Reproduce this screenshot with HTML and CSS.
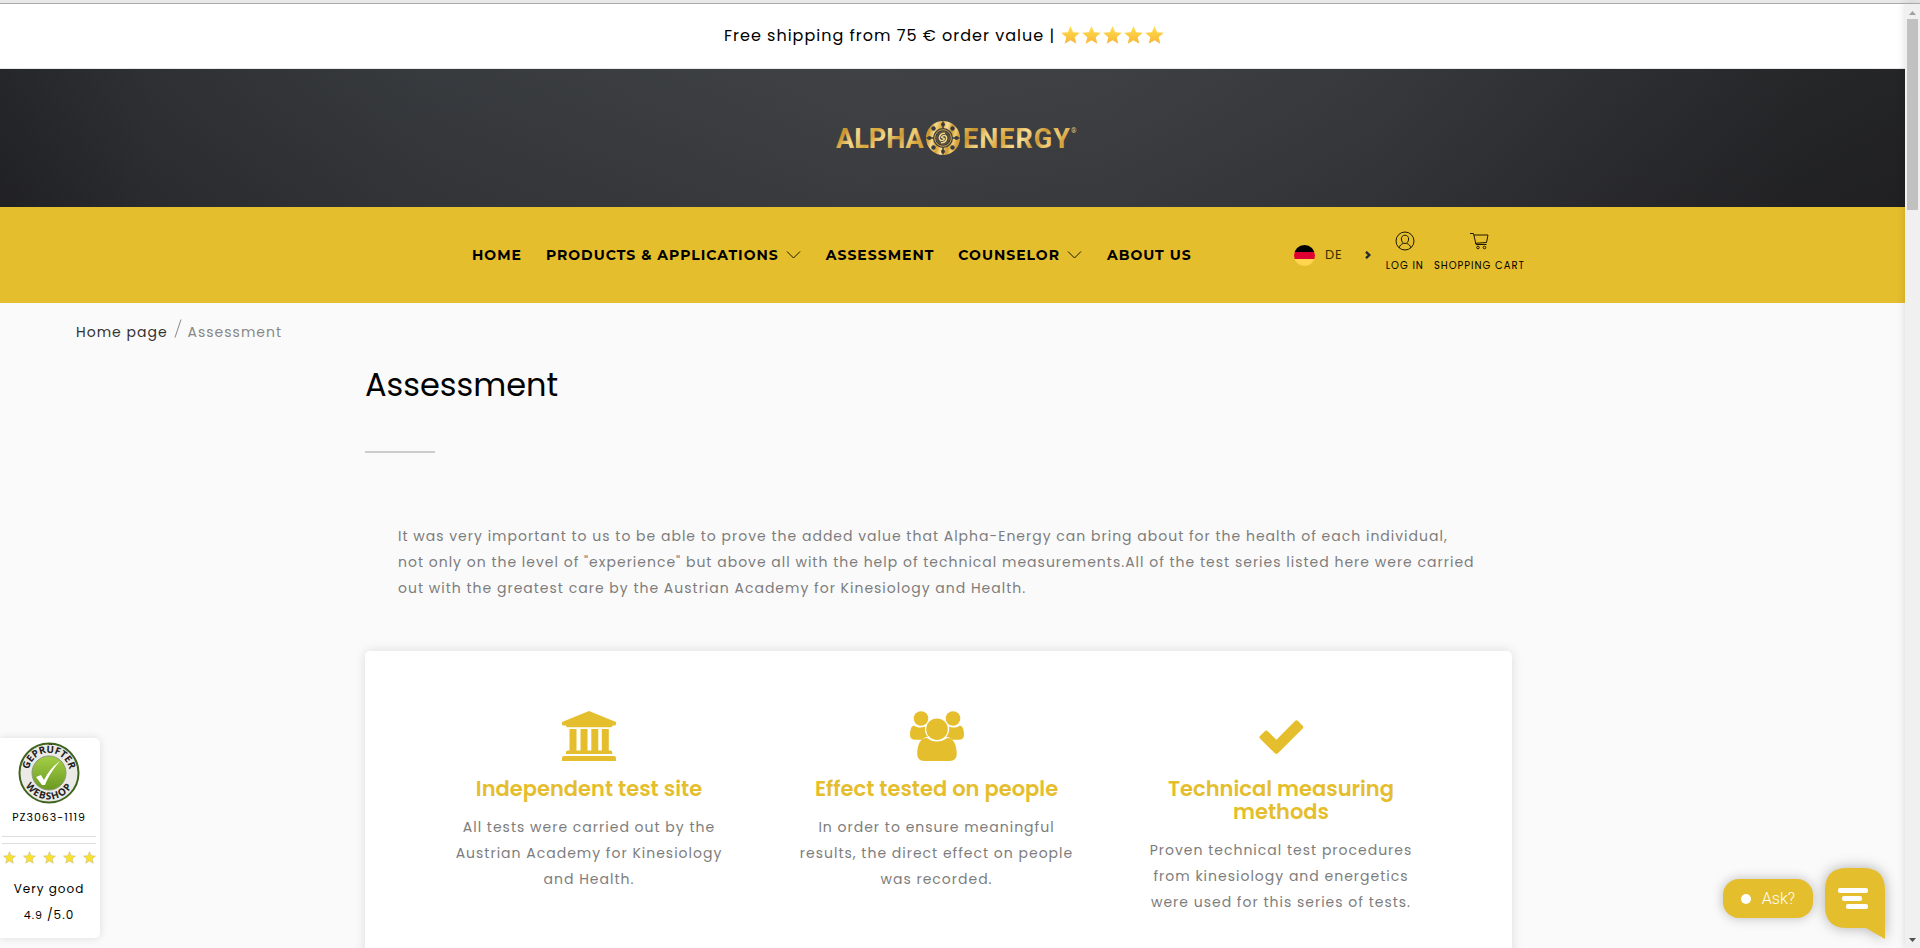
FILE: index.html
```html
<!DOCTYPE html>
<html lang="en">
<head>
<meta charset="utf-8">
<title>Assessment – Alpha Energy</title>
<link rel="stylesheet" href="styles.css">
</head>
<body>
<svg width="0" height="0" class="defs" aria-hidden="true">
  <defs>
    <linearGradient id="gold" x1="0" y1="0" x2="1" y2="0.25">
      <stop offset="0" stop-color="#f0cd70"/><stop offset=".15" stop-color="#c8932a"/><stop offset=".3" stop-color="#f3d98c"/><stop offset=".48" stop-color="#d9a437"/><stop offset=".62" stop-color="#f7e09a"/><stop offset=".78" stop-color="#cc9730"/><stop offset=".9" stop-color="#f0cf78"/><stop offset="1" stop-color="#d6a23c"/>
    </linearGradient>
    <linearGradient id="star" x1="0" y1="0" x2="0" y2="1"><stop offset="0" stop-color="#ffe04a"/><stop offset="1" stop-color="#f8b53a"/></linearGradient>
    <linearGradient id="green" x1="0" y1="0" x2="0" y2="1"><stop offset="0" stop-color="#a3cf45"/><stop offset="1" stop-color="#6c9a22"/></linearGradient>
    <symbol id="s-star" viewBox="0 0 20 20"><path d="M10 1l2.600 6.200 6.700.6-5.100 4.400 1.600 6.600L10 15.300l-5.800 3.500 1.600-6.600L.7 7.800l6.700-.6z"/></symbol>
    <symbol id="s-down" viewBox="0 0 16 10"><path d="M1.500 1.500l6.500 6.500 6.500-6.500" fill="none" stroke="#1a1600" stroke-width="1"/></symbol>
  </defs>
</svg>
<div class="window">
  <div class="page">
    <div class="banner">Free shipping from 75 € order value |
      <span class="stars">
        <svg><use href="#s-star"/></svg><svg><use href="#s-star"/></svg><svg><use href="#s-star"/></svg><svg><use href="#s-star"/></svg><svg><use href="#s-star"/></svg>
      </span>
    </div>
    <header class="hero">
      <a href="#" class="logo" aria-label="Alpha Energy">
        <svg width="242" height="36" viewBox="0 0 242 36">
          <g fill="url(#gold)" class="logo-text"><text x="2" y="28">ALPHA</text><text x="129" y="28" class="tracked">ENERGY</text><text x="237" y="13" class="reg">®</text></g>
          <circle cx="109" cy="18" r="17" fill="url(#gold)"/>
          <g transform="translate(1 0)">
          <g fill="#3a3b3d">
            <circle cx="108" cy="4.500" r="2"/><circle cx="108" cy="31.500" r="2"/><circle cx="94.500" cy="18" r="2"/><circle cx="121.500" cy="18" r="2"/><path d="M107.300 1.500h1.400v7h-1.400zM107.300 27.500h1.400v7h-1.400zM91.500 17.300h7v1.400h-7zM117.500 17.300h7v1.400h-7z"/>
            <circle cx="98.500" cy="8.500" r="2.200"/><circle cx="117.500" cy="8.500" r="2.200"/><circle cx="98.500" cy="27.500" r="2.200"/><circle cx="117.500" cy="27.500" r="2.200"/>
            <circle cx="108" cy="18" r="10"/>
          </g>
          <circle cx="108" cy="18" r="8.300" fill="none" stroke="#d5a84a"/>
          <circle cx="108" cy="18" r="6.200" fill="none" stroke="#8a7138" stroke-width=".8"/>
          <path d="M109.500 13.300c-5 0-6.500 5-3.800 7.300M106.500 22.700c5 0 6.500-5 3.800-7.300M109.800 15.500c-3.500 0-4 2.500-1.800 2.500s1.700 2.600-1.800 2.500" fill="none" stroke="#f1d58a" stroke-width="1.500" stroke-linecap="round"/>
          </g>
        </svg>
      </a>
    </header>
    <nav class="nav">
      <ul class="menu">
        <li><a href="#">HOME</a></li>
        <li><a href="#">PRODUCTS &amp; APPLICATIONS <svg><use href="#s-down"/></svg></a></li>
        <li><a href="#">ASSESSMENT</a></li>
        <li><a href="#">COUNSELOR <svg><use href="#s-down"/></svg></a></li>
        <li><a href="#">ABOUT US</a></li>
      </ul>
      <div class="tools">
        <button class="lang" type="button">
          <svg width="21" height="21" viewBox="0 0 21 21"><clipPath id="c"><circle cx="10.500" cy="10.500" r="10.500"/></clipPath><g clip-path="url(#c)"><path fill="#000" d="M0 0h21v7H0z"/><path fill="#dd0031" d="M0 7h21v7H0z"/><path fill="#ffd54f" d="M0 14h21v7H0z"/></g></svg>
          <span>DE</span>
          <svg class="caret" width="6" height="8" viewBox="0 0 6 8"><path d="M1 .8L4.300 4 1 7.200" fill="none" stroke="#222b30" stroke-width="2.400"/></svg>
        </button>
        <a href="#" class="tool"><svg width="20" height="20" viewBox="0 0 20 20" fill="none" stroke="#1c1800"><circle cx="10" cy="10" r="9"/><path d="M10 4.200c-2.300 0-3.600 1.600-3.600 3.800 0 2.700 1.600 4.500 3.600 4.500s3.600-1.800 3.600-4.500c0-2.200-1.300-3.800-3.600-3.800zM4.200 17c.5-2.500 2-4 4-4.500M15.800 17c-.5-2.500-2-4-4-4.500"/></svg><span>LOG IN</span></a>
        <a href="#" class="tool"><svg width="20" height="20" viewBox="0 0 20 20" fill="none" stroke="#1c1800"><path d="M1 2.500h3.500L7 13.500h10.500M5 4h14l-1.500 7.500-11 .8M17 13.500H7.500"/><circle cx="9" cy="16.500" r="1.300"/><circle cx="15.500" cy="16.500" r="1.300"/></svg><span>SHOPPING CART</span></a>
      </div>
    </nav>
    <div class="crumbs"><a href="#">Home page</a><svg width="8" height="19" viewBox="0 0 8 19"><path d="M1 18.500L7 .5" stroke="#888" fill="none"/></svg><span>Assessment</span></div>
    <main class="content">
      <h1>Assessment</h1>
      <hr class="rule">
      <p class="intro">It was very important to us to be able to prove the added value that Alpha-Energy can bring about for the health of each individual,<br>not only on the level of "experience" but above all with the help of technical measurements.All of the test series listed here were carried<br>out with the greatest care by the Austrian Academy for Kinesiology and Health.</p>
      <section class="card">
        <article>
          <svg width="54" height="50" viewBox="0 0 54 50"><path d="M27 0l27 11v2q0 1.500-1.500 1.500H50.500q0 1.700-1.500 1.700H5.500Q4 16.200 4 14.500H1.500Q0 14.500 0 13v-2zM7.500 18h7v21.500h4V18h7v21.500h3.800V18h7v21.500h3.500V18h7v21.500H48.500q1.700 0 1.700 1.700V43H4v-1.800q0-1.700 1.700-1.700H7.500zM2 45h50q2 0 2 2v3H0v-3q0-2 2-2z"/></svg>
          <h2>Independent test site</h2>
          <p>All tests were carried out by the<br>Austrian Academy for Kinesiology<br>and Health.</p>
        </article>
        <article>
          <svg width="54" height="50" viewBox="0 0 54 50"><circle cx="11" cy="7.500" r="7.300"/><circle cx="43" cy="7.500" r="7.300"/><circle cx="27" cy="18.200" r="10.800"/><path d="M4 14.700c4 2.200 8 2.300 11 .9-.6 4 .3 7.500 2.800 10.200-3 .5-4.600 1.500-6 3H5q-5 0-5-5c0-4 1-9.100 4-9.100zM50 14.700c-4 2.200-8 2.300-11 .9.600 4-.3 7.500-2.800 10.200 3 .5 4.600 1.500 6 3H49q5 0 5-5c0-4-1-9.100-4-9.100zM17 27c6 4.800 14 4.800 20 0 7 0 9.700 7.500 9.700 16q0 7-7 7H14.200q-7 0-7-7c0-8.500 2.800-16 9.800-16z"/></svg>
          <h2>Effect tested on people</h2>
          <p>In order to ensure meaningful<br>results, the direct effect on people<br>was recorded.</p>
        </article>
        <article>
          <svg width="54" height="50" viewBox="0 0 54 50"><path d="M6.200 24.800l4.600-4.600q1.500-1.500 3 0l8.600 8.600L41 10q1.500-1.500 3 0l4.700 4.700q1.200 1.300 0 2.800L23.900 42.300q-1.500 1.400-3 0L6.200 27.800q-1.500-1.500 0-3z"/></svg>
          <h2>Technical measuring<br>methods</h2>
          <p>Proven technical test procedures<br>from kinesiology and energetics<br>were used for this series of tests.</p>
        </article>
      </section>
    </main>
  </div>
  <div class="scrollbar" aria-hidden="true">
    <svg width="7" height="4" viewBox="0 0 7 4"><path d="M0 4L3.500 0 7 4z" fill="#a0a0a0"/></svg>
    <div class="thumb"></div>
    <svg width="7" height="4" viewBox="0 0 7 4"><path d="M0 0h7L3.500 4z" fill="#505050"/></svg>
  </div>
</div>
<aside class="trust">
  <svg class="seal" width="62" height="62" viewBox="0 0 62 62">
    <circle cx="31" cy="31" r="29.500" fill="#eceae6" stroke="#3f6420" stroke-width="2"/>
    <circle cx="31" cy="31" r="17" fill="url(#green)" stroke="#8a9a78"/>
    <path id="arc1" d="M12 39A20.500 20.500 0 1 1 50 39" fill="none"/>
    <path id="arc2" d="M4.500 31A26.500 26.500 0 0 0 57.500 31" fill="none"/>
    <text class="seal-text"><textPath href="#arc1" startOffset="50%" text-anchor="middle">GEPRÜFTER</textPath></text>
    <text class="seal-text wide"><textPath href="#arc2" startOffset="50%" text-anchor="middle">WEBSHOP</textPath></text>
    <path d="M18 35l5-2 3 5c4-8 9-14 16-19-6 7-11 14-15 24h-3z" fill="#fff"/>
  </svg>
  <span class="code">PZ3063-1119</span>
  <div class="lines"></div>
  <div class="rate"><svg><use href="#s-star"/></svg><svg><use href="#s-star"/></svg><svg><use href="#s-star"/></svg><svg><use href="#s-star"/></svg><svg><use href="#s-star"/></svg></div>
  <span class="grade">Very good</span>
  <span class="score">4.9 <b>/5.0</b></span>
</aside>
<div class="chat">
  <button class="ask" type="button"><i></i>Ask?</button>
  <button class="bubble" type="button" aria-label="Open chat"><svg width="60" height="72" viewBox="0 0 60 72"><path d="M22 0h16q22 0 22 22v49L41 60H22Q0 60 0 38V22Q0 0 22 0z" fill="#e5be2d"/><g fill="#fff"><rect x="13" y="20" width="30" height="5" rx="2"/><rect x="17" y="28" width="20" height="5" rx="2"/><rect x="21" y="36" width="22" height="5" rx="2"/></g></svg></button>
</div>
</body>
</html>
```

FILE: styles.css
```css
* { box-sizing: border-box; }
body {
  margin: 0;
  height: 100vh;
  overflow: hidden;
  background: #fafafa;
  color: #000;
  font-family: Poppins, Inter, "Open Sans", sans-serif;
  letter-spacing: 1px;
}
a { color: inherit; text-decoration: none; }
button { border: 0; padding: 0; background: none; font: inherit; letter-spacing: inherit; color: inherit; }
h1, h2, p { margin: 0; }
.defs { position: absolute; }
.window {
  display: grid;
  grid-template-columns: 1fr 15px;
  height: 100vh;
  border-top: 3px solid #e8e8e8;
}
.page { overflow: hidden; border-top: 1px solid #aaa; }
.banner {
  display: flex;
  justify-content: center;
  align-items: center;
  gap: 5px;
  height: 65px;
  padding: 0 16px 2px 0;
  background: #fff;
  border-bottom: 1px solid #e8e8e8;
  font-size: 16px;
}
.stars { display: flex; fill: url(#star); }
.stars svg { width: 21px; height: 20px; }
.hero {
  display: flex;
  justify-content: center;
  align-items: center;
  height: 138px;
  padding-left: 4px;
  background:
    linear-gradient(180deg, rgba(70, 76, 82, .15), rgba(40, 36, 44, .18)),
    linear-gradient(90deg, #1f2022 0, #2a2c2f 8%, #34373a 22%, #3e4043 45%, #3c3e40 58%, #343639 72%, #28292b 85%, #202122 94%, #1e1e1f 100%);
}
.logo svg { display: block; overflow: visible; }
.logo-text { font-family: Roboto, sans-serif; font-weight: 700; font-size: 27px; letter-spacing: 0; }
.logo-text .tracked { letter-spacing: 1px; }
.logo-text .reg { font-size: 7px; }
.nav {
  display: flex;
  align-items: center;
  justify-content: space-between;
  height: 96px;
  padding: 0 380px 0 472px;
  background: #e5be2d;
}
.menu { display: flex; gap: 24px; margin: 0; padding: 0; list-style: none; font-family: Montserrat, Inter, sans-serif; font-weight: 700; font-size: 14px; }
.menu a { display: flex; align-items: center; gap: 6px; white-space: nowrap; }
.menu svg { width: 17px; height: 10px; }
.tools { display: flex; align-items: center; gap: 10px; }
.lang { display: flex; align-items: center; gap: 10px; font-size: 13px; color: #3a3100; margin-right: 5px; }
.lang .caret { margin-left: 12px; }
.tool { display: flex; flex-direction: column; align-items: center; gap: 9px; padding-bottom: 7px; font-size: 10px; line-height: 12px; white-space: nowrap; }
.crumbs { display: flex; align-items: center; gap: 6px; padding: 13px 0 0 76px; height: 46px; font-size: 14px; color: #888; }
.crumbs a { color: #333; }
.crumbs svg { margin-top: -8px; }
.content { max-width: 1175px; margin: 0 auto; padding-right: 28px; }
h1 { padding-top: 16px; font-size: 32px; line-height: 40px; font-weight: 400; letter-spacing: 0; }
.rule { width: 70px; height: 2px; margin: 46px 0 0; border: 0; background: #ccc; }
.intro { padding: 70px 0 50px 33px; font-size: 14px; line-height: 26px; color: #7d7d7d; white-space: nowrap; }
.card {
  display: grid;
  grid-template-columns: 346fr 349fr 340fr;
  height: 400px;
  padding: 60px 61px 0 51px;
  background: #fff;
  border-radius: 5px;
  box-shadow: 0 0 12px rgba(0, 0, 0, .12);
}
article { display: flex; flex-direction: column; align-items: center; text-align: center; }
article svg { fill: #e5be2d; }
article h2 { margin: 16px 0 14px; color: #e5be2d; font-size: 21px; line-height: 23px; font-weight: 600; letter-spacing: 0; }
article p { font-size: 14px; line-height: 26px; color: #7d7d7d; white-space: nowrap; }
.scrollbar {
  display: flex;
  flex-direction: column;
  align-items: center;
  padding: 7px 0 6px;
  border-top: 1px solid #aaa;
  background: #f0f0f0;
  box-shadow: 0 0 8px rgba(0, 0, 0, .14);
}
.thumb { width: 11px; height: 191px; margin: 4px 0 auto; background: #c1c1c1; }
.trust {
  position: absolute;
  left: 0;
  bottom: 10px;
  width: 100px;
  height: 200px;
  display: flex;
  flex-direction: column;
  align-items: center;
  padding: 4px 4px 0 2px;
  background: #fff;
  border-radius: 0 5px 5px 0;
  box-shadow: 0 0 8px rgba(0, 0, 0, .12);
  font-size: 12px;
}
.seal { flex: none; }
.seal-text { font: 700 10px "Open Sans", sans-serif; letter-spacing: 0; fill: #222; }
.seal-text.wide { letter-spacing: 1px; }
.code { margin-top: 5px; font-size: 11px; line-height: 16px; }
.lines { flex: none; width: 94px; height: 8px; margin-top: 11px; border: solid #ddd; border-width: 1px 0; }
.rate { display: flex; gap: 7px; margin-top: 7px; fill: #f9e02c; stroke: #cfc48a; stroke-width: 1px; }
.rate svg { width: 13px; height: 13px; }
.grade { margin-top: 15px; line-height: 20px; }
.score { margin-top: 6px; font-size: 11px; line-height: 20px; }
.score b { font-weight: 400; font-size: 12px; }
.chat { position: absolute; right: 35px; bottom: 8px; display: flex; gap: 12px; align-items: flex-start; }
.ask { display: flex; align-items: center; gap: 11px; height: 39px; margin-top: 11px; padding: 0 18px; border-radius: 16px; background: #e5be2d; color: #fff; font-family: Roboto, sans-serif; font-weight: 300; font-size: 16px; letter-spacing: 0; box-shadow: 0 0 12px rgba(0, 0, 0, .25); }
.ask i { width: 10px; height: 10px; border-radius: 50%; background: #fff; }
.bubble svg { display: block; overflow: visible; filter: drop-shadow(0 0 7px rgba(0, 0, 0, .3)); }
```
